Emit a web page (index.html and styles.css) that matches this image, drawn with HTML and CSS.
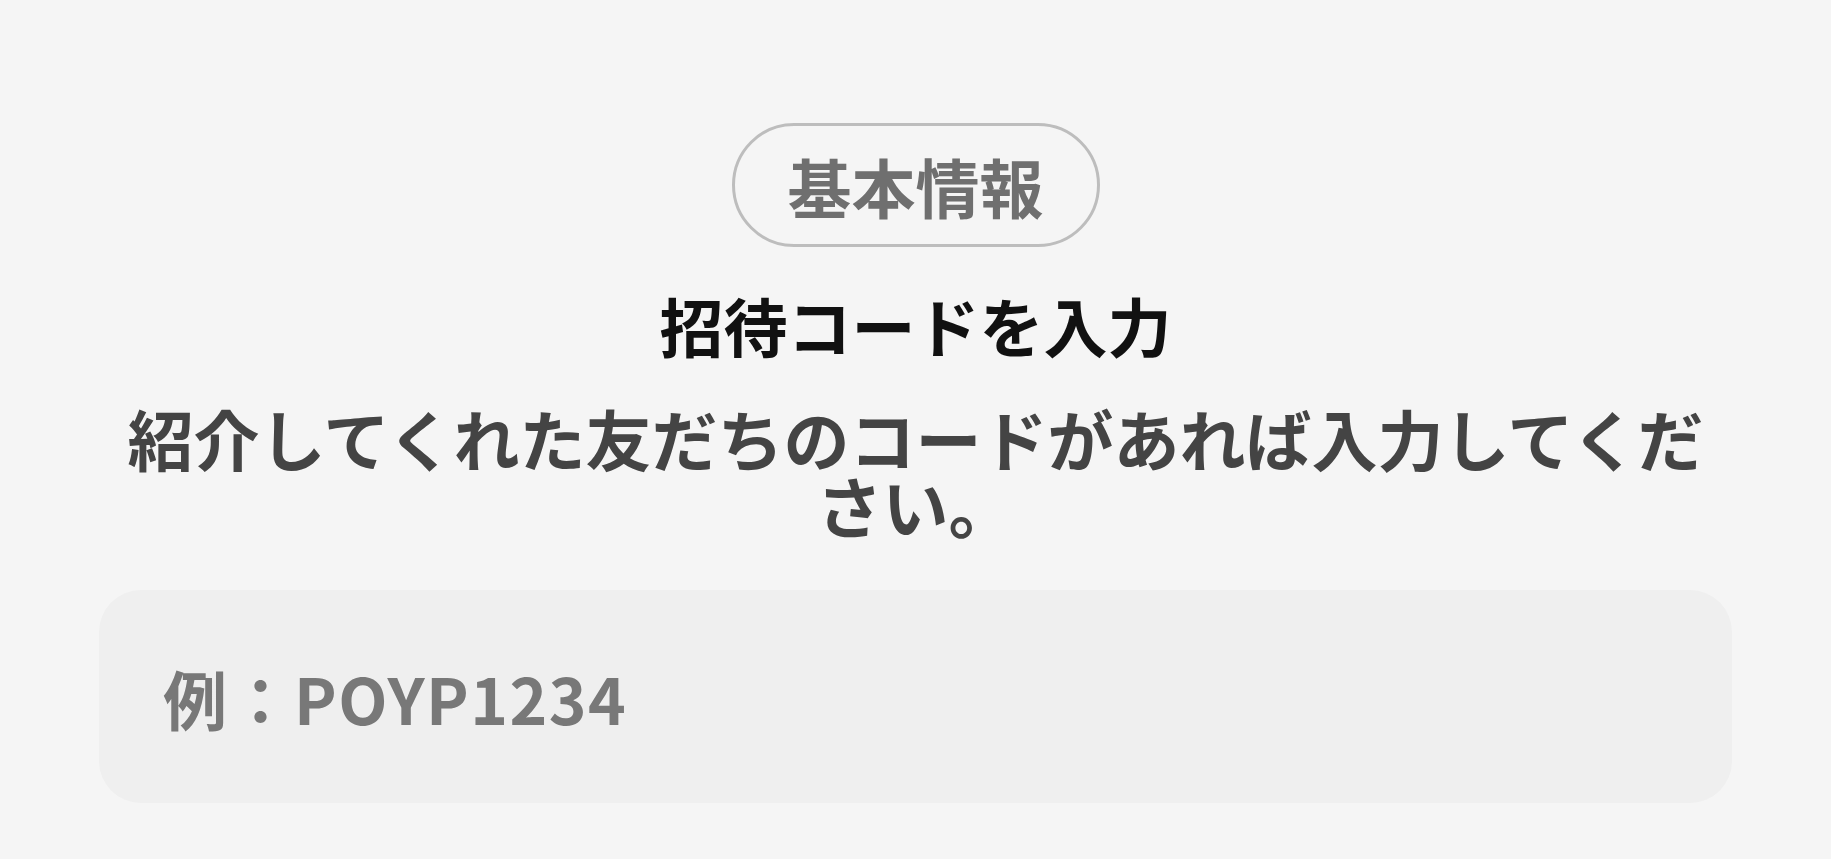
FILE: index.html
```html
<!DOCTYPE html>
<html lang="ja">
<head>
<meta charset="utf-8">
<title>招待コードを入力</title>
<link rel="stylesheet" href="styles.css">
</head>
<body>
<main class="page">
  <div class="badge">基本情報</div>
  <h1 class="title">招待コードを入力</h1>
  <p class="desc">紹介してくれた友だちのコードがあれば入力してください。</p>
  <input class="code-input" type="text" placeholder="例：POYP1234">
</main>
</body>
</html>
```

FILE: styles.css
```css
* { box-sizing: border-box; }
html, body {
  margin: 0;
  padding: 0;
  background: #f5f5f5;
}
body {
  font-family: "Noto Sans CJK JP", "Noto Sans", sans-serif;
  font-weight: 700;
}
.page {
  display: flex;
  flex-direction: column;
  align-items: center;
  padding: 123px 99px 0;
}
.badge {
  height: 124px;
  display: inline-flex;
  align-items: center;
  padding: 0 53px;
  border: 3px solid #bdbdbd;
  border-radius: 62px;
  font-size: 64px;
  line-height: 1;
  color: #6f6f6f;
}
.title {
  margin: 39px 0 0;
  font-size: 64px;
  line-height: 77px;
  font-weight: 700;
  color: #111111;
}
.desc {
  margin: 41px 0 0;
  width: 100%;
  text-align: center;
  font-size: 66px;
  line-height: 67px;
  color: #444444;
}
.code-input {
  margin-top: 52px;
  width: 100%;
  height: 213px;
  border: none;
  outline: none;
  border-radius: 42px;
  background: #efefef;
  padding: 0 64px;
  font-family: inherit;
  font-weight: 700;
  font-size: 64px;
  letter-spacing: 1.5px;
  color: #333;
}
.code-input::placeholder {
  color: #787878;
  opacity: 1;
}
```
